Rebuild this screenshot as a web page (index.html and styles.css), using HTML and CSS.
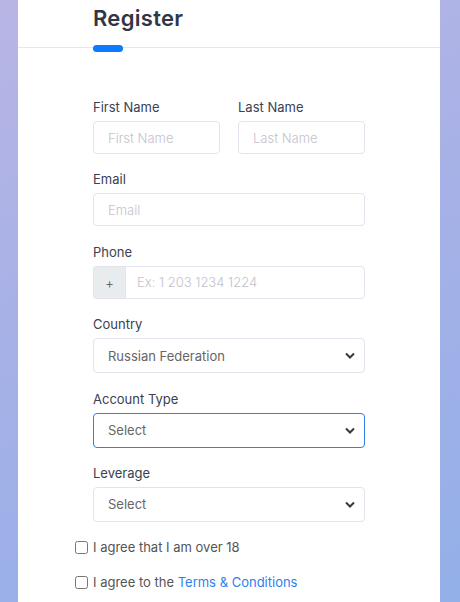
FILE: index.html
```html
<!DOCTYPE html>
<html lang="en">
<head>
  <meta charset="UTF-8" />
  <meta name="viewport" content="width=device-width, initial-scale=1.0"/>
  <title>Register</title>
  <link rel="stylesheet" href="styles.css">
</head>
<body>
  <div class="card">
    <div class="card-header">
      <h1>Register</h1>
    </div>

    <form class="register-form">
      <div class="row">
        <div class="field">
          <label for="first-name">First Name</label>
          <input id="first-name" type="text" placeholder="First Name">
        </div>
        <div class="field">
          <label for="last-name">Last Name</label>
          <input id="last-name" type="text" placeholder="Last Name">
        </div>
      </div>

      <div class="field">
        <label for="email">Email</label>
        <input id="email" type="email" placeholder="Email">
      </div>

      <div class="field">
        <label for="phone">Phone</label>
        <div class="input-group">
          <span class="addon">+</span>
          <input id="phone" type="tel" placeholder="Ex: 1 203 1234 1224">
        </div>
      </div>

      <div class="field">
        <label for="country">Country</label>
        <select id="country">
          <option>Russian Federation</option>
        </select>
      </div>

      <div class="field">
        <label for="account-type">Account Type</label>
        <select id="account-type" class="focused">
          <option>Select</option>
        </select>
      </div>

      <div class="field">
        <label for="leverage">Leverage</label>
        <select id="leverage">
          <option>Select</option>
        </select>
      </div>

      <label class="check">
        <input type="checkbox"><span>I agree that I am over 18</span>
      </label>
      <label class="check">
        <input type="checkbox"><span>I agree to the <a href="#">Terms &amp; Conditions</a></span>
      </label>
    </form>
  </div>
</body>
</html>
```

FILE: styles.css
```css
html, body {
  margin: 0;
  padding: 0;
  height: 100%;
  overflow: hidden;
}

body {
  font-family: Inter, "Noto Sans", sans-serif;
  background: linear-gradient(160deg, #b8b5e4 0%, #a6b1e7 45%, #93b0e8 100%);
  color: #3a4150;
}

.card {
  margin: 0 20px 0 18px;
  background: white;
  min-height: 100%;
}

.card-header {
  position: relative;
  height: 47px;
  padding: 0 75px;
  border-bottom: 1px solid #e6e7ea;
}

.card-header h1 {
  margin: 0;
  padding-top: 5px;
  font-size: 22px;
  font-weight: 600;
  color: #2f3646;
  letter-spacing: 0.3px;
}

.card-header::after {
  content: '';
  position: absolute;
  left: 75px;
  bottom: -5px;
  width: 30px;
  height: 7px;
  border-radius: 4px;
  background: #0a7cff;
}

.register-form {
  padding: 51px 75px 20px;
  display: flex;
  flex-direction: column;
}

.row {
  display: flex;
  gap: 18px;
}

.row .field {
  flex: 1;
}

.field {
  display: flex;
  flex-direction: column;
  margin-bottom: 17.4px;
}

.field label {
  font-size: 13px;
  line-height: 16px;
  margin-bottom: 6px;
  color: #3a4150;
}

input[type=text], input[type=email], input[type=tel], select {
  box-sizing: border-box;
  height: 33px;
  width: 100%;
  border: 1px solid #e2e3ec;
  border-radius: 4px;
  padding: 0 14px;
  font-family: inherit;
  font-size: 13px;
  color: #666;
  background: white;
  outline: none;
}

input::placeholder {
  color: #c4c2cc;
  font-weight: 300;
}

select {
  height: 35px;
  appearance: none;
  -webkit-appearance: none;
  background-image: url("data:image/svg+xml,%3Csvg xmlns='http://www.w3.org/2000/svg' width='10' height='7' viewBox='0 0 10 7'%3E%3Cpath d='M1 1.5l4 4 4-4' fill='none' stroke='%23343a40' stroke-width='2'/%3E%3C/svg%3E");
  background-repeat: no-repeat;
  background-position: right 9px center;
}

select.focused {
  border-color: #2f80ed;
}

.input-group {
  display: flex;
}

.input-group .addon {
  flex-shrink: 0;
  width: 32px;
  height: 33px;
  box-sizing: border-box;
  display: flex;
  align-items: center;
  justify-content: center;
  background: #e9ecef;
  border: 1px solid #e2e3ec;
  border-right: none;
  border-radius: 4px 0 0 4px;
  font-size: 14px;
  font-weight: 300;
  color: #555;
}

.input-group input {
  border-radius: 0 4px 4px 0;
  padding-left: 11px;
}

.check {
  display: flex;
  align-items: center;
  gap: 5px;
  margin-left: -18px;
  height: 20px;
  margin-top: -2px;
  margin-bottom: 17px;
  font-size: 13px;
  color: #555;
}

.check input {
  margin: 0;
  width: 13px;
  height: 13px;
}

.check a {
  color: #2d7ff0;
  text-decoration: none;
}
```
